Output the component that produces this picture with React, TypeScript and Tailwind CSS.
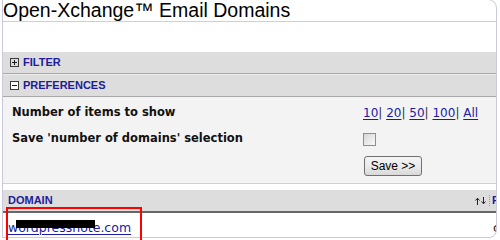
import React from "react";

function PlusBox({ minus }: { minus?: boolean }) {
  return (
    <svg width="9" height="9" viewBox="0 0 9 9" className="shrink-0">
      <rect x="0.5" y="0.5" width="8" height="8" fill={minus ? "#ffffff" : "none"} stroke="#3a3a3a" strokeWidth="1" />
      <line x1="2" y1="4.5" x2="7" y2="4.5" stroke="#1a1a1a" strokeWidth="1" />
      {!minus && <line x1="4.5" y1="2" x2="4.5" y2="7" stroke="#1a1a1a" strokeWidth="1" />}
    </svg>
  );
}

function SortArrows() {
  return (
    <svg width="12" height="8" viewBox="0 0 12 8" className="shrink-0">
      <path d="M2.5 8V1.5M0.5 3.5L2.5 1.2L4.5 3.5" stroke="#222" strokeWidth="1" fill="none" />
      <path d="M8.5 0V6.5M6.5 4.5L8.5 6.8L10.5 4.5" stroke="#222" strokeWidth="1" fill="none" />
    </svg>
  );
}

export default function App() {
  const head = "font-['Liberation_Sans',Arial,sans-serif] font-bold text-[11px] text-[#1c1c9c]";
  const label = "font-['DejaVu_Sans',Verdana,sans-serif] font-bold text-[11.5px] text-[#111]";
  const link = "text-[#1a1aa8] underline underline-offset-[2px]";
  return (
    <div className="relative w-[500px] h-[240px] overflow-hidden bg-white">
      <div className="ml-[2px] mt-[-1px] w-[495px] h-[239px] border border-[#c9c9dc] rounded-tr-[9px] rounded-br-[8px] overflow-hidden flex flex-col bg-white">
        {/* Title */}
        <div className="h-[22px] shrink-0 border-b border-[#cfcfd8] font-['Liberation_Sans',Arial,sans-serif] text-[19.5px] leading-[20px] text-black whitespace-nowrap">
          Open-Xchange™ Email Domains
        </div>
        <div className="h-[30px] shrink-0" />
        {/* FILTER */}
        <div className="h-[22px] shrink-0 bg-[#dddddd] border-b border-[#a8a8a8] flex items-center pl-[7px] gap-[4px]">
          <PlusBox />
          <span className={head}>FILTER</span>
        </div>
        <div className="h-[1px] shrink-0 bg-[#ececec]" />
        {/* PREFERENCES */}
        <div className="h-[22px] shrink-0 bg-[#dddddd] border-b border-[#a8a8a8] flex items-center pl-[7px] gap-[4px]">
          <PlusBox minus />
          <span className={head}>PREFERENCES</span>
        </div>
        <div className="h-[87px] shrink-0 bg-[#f3f3f3] border-b border-[#cfcfdc] pt-[7px] pl-[9px] flex flex-col gap-[8px]">
          <div className="h-[18px] flex items-center">
            <div className={`w-[351px] ${label}`}>Number of items to show</div>
            <div className="font-['DejaVu_Sans',Verdana,sans-serif] text-[12px] text-[#333] whitespace-nowrap">
              <span className={link}>10</span>|{" "}
              <span className={link}>20</span>|{" "}
              <span className={link}>50</span>|{" "}
              <span className={link}>100</span>|{" "}
              <span className={link}>All</span>
            </div>
          </div>
          <div className="h-[18px] flex items-center">
            <div className={`w-[351px] ${label}`}>Save 'number of domains' selection</div>
            <div className="w-[13px] h-[13px] border border-[#8e8e8e] bg-gradient-to-br from-[#d6d6d6] to-[#fafafa]" />
          </div>
          <div className="h-[20px] flex items-center">
            <div className="w-[352px]" />
            <div className="w-[58px] h-[20px] rounded-[3px] border border-[#707070] bg-gradient-to-b from-[#f4f4f4] via-[#ebebeb] to-[#d9d9d9] flex items-center justify-center font-['Liberation_Sans',Arial,sans-serif] text-[12px] text-black">
              Save &gt;&gt;
            </div>
          </div>
        </div>
        <div className="h-[6px] shrink-0" />
        {/* DOMAIN header */}
        <div className="h-[23px] shrink-0 bg-[#dddddd] border-b-2 border-[#676767] flex items-stretch">
          <div className="flex-1 flex items-center pl-[5px] pr-[2px]">
            <span className={head}>DOMAIN</span>
            <div className="flex-1" />
            <SortArrows />
          </div>
          <div className="my-[5px] border-l border-dotted border-[#9a9a9a]" />
          <div className="w-[6px] pl-[2px] flex items-center overflow-hidden">
            <span className={head}>P</span>
          </div>
        </div>
        {/* Row */}
        <div className="flex-1 flex items-start pt-[7px]">
          <div className="flex-1 pl-[5px] font-['DejaVu_Sans',Verdana,sans-serif] text-[12.5px] leading-[15px]">
            <span className={link}>wordpressnote.com</span>
          </div>
          <div className="w-[3px] overflow-hidden font-['DejaVu_Sans',Verdana,sans-serif] text-[12.5px] leading-[15px] text-[#222]">c</div>
        </div>
      </div>
      {/* Redaction */}
      <div className="absolute left-[16px] top-[220px] w-[79px] h-[8px] bg-black" />
      {/* Red annotation box */}
      <div className="absolute left-[6px] top-[207px] w-[136px] h-[40px] border-2 border-[#ff0000]" />
    </div>
  );
}
